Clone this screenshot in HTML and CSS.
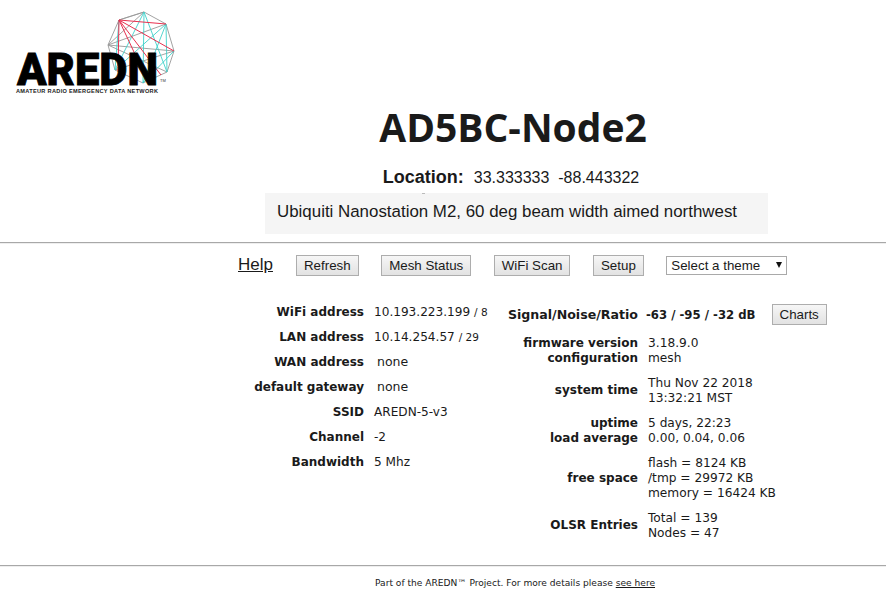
FILE: index.html
```html
<!DOCTYPE html>
<html lang="en">
<head>
    <meta charset="UTF-8">
    <meta name="viewport" content="width=device-width, initial-scale=1.0">
    <title>AD5BC-Node2 status</title>
    <link rel="stylesheet" href="styles.css">
</head>
<body>
    <header class="masthead">
        <svg class="logo" viewBox="0 0 180 100" width="180" height="100" role="img" aria-label="AREDN logo">
            <g fill="none" stroke-width="0.9">
                <g stroke="#999">
                    <path d="M144 12 166 24 174 51 167 72 143 83 115 70 108 45 119 20Z"/>
                    <path d="M119 20 144 12M108 45 174 51M108 45 166 24M144 12 108 45M108 45 167 72M115 70 174 51"/>
                </g>
                <g stroke="#3fd0ca">
                    <path d="M144 12 167 72M144 12 143 83M166 24 143 83M166 24 115 70M144 12 115 70M174 51 143 83M119 20 115 70M166 24 167 72"/>
                </g>
                <g stroke="#e8304f" stroke-width="1">
                    <path d="M119 20 166 24M119 20 174 51M119 20 161 75M119 20 148 82M119 20 118 71"/>
                </g>
            </g>
            <text class="logo-word" x="17" y="85" textLength="141" lengthAdjust="spacingAndGlyphs">AREDN</text>
            <text class="logo-tm" x="160" y="82">TM</text>
            <text class="logo-tag" x="16" y="92.5" textLength="142" lengthAdjust="spacing">AMATEUR RADIO EMERGENCY DATA NETWORK</text>
        </svg>
        <div class="node-head">
            <h1>AD5BC-Node2</h1>
            <p class="location"><strong>Location:</strong><span>33.333333&nbsp;&nbsp;-88.443322</span></p>
            <p class="description">Ubiquiti Nanostation M2, 60 deg beam width aimed northwest</p>
        </div>
    </header>

    <hr class="rule">

    <nav class="toolbar">
        <a class="help" href="#">Help</a>
        <button class="btn">Refresh</button>
        <button class="btn">Mesh Status</button>
        <button class="btn">WiFi Scan</button>
        <button class="btn">Setup</button>
        <div class="theme-select">Select a theme<span class="caret"></span></div>
    </nav>

    <main class="status">
        <dl class="col-left">
            <div class="row"><dt>WiFi address</dt><dd>10.193.223.199 <small>/ 8</small></dd></div>
            <div class="row"><dt>LAN address</dt><dd>10.14.254.57 <small>/ 29</small></dd></div>
            <div class="row"><dt>WAN address</dt><dd class="none">none</dd></div>
            <div class="row"><dt>default gateway</dt><dd class="none">none</dd></div>
            <div class="row"><dt>SSID</dt><dd>AREDN-5-v3</dd></div>
            <div class="row"><dt>Channel</dt><dd>-2</dd></div>
            <div class="row"><dt>Bandwidth</dt><dd>5 Mhz</dd></div>
        </dl>
        <div class="col-right">
            <div class="group signal">
                <div class="labels">Signal/Noise/Ratio</div>
                <div class="values"><b>-63 / -95 / -32 dB</b><button class="btn charts">Charts</button></div>
            </div>
            <div class="group">
                <div class="labels">firmware version<br>configuration</div>
                <div class="values">3.18.9.0<br>mesh</div>
            </div>
            <div class="group raised">
                <div class="labels">system time</div>
                <div class="values">Thu Nov 22 2018<br>13:32:21 MST</div>
            </div>
            <div class="group">
                <div class="labels">uptime<br>load average</div>
                <div class="values">5 days, 22:23<br>0.00, 0.04, 0.06</div>
            </div>
            <div class="group">
                <div class="labels">free space</div>
                <div class="values">flash = 8124 KB<br>/tmp = 29972 KB<br>memory = 16424 KB</div>
            </div>
            <div class="group raised">
                <div class="labels">OLSR Entries</div>
                <div class="values">Total = 139<br>Nodes = 47</div>
            </div>
        </div>
    </main>

    <hr class="rule">

    <footer class="foot">Part of the AREDN&trade; Project. For more details please <a href="#">see here</a></footer>
</body>
</html>
```

FILE: styles.css
```css
* {
    margin: 0;
    padding: 0;
    box-sizing: border-box;
}

body {
    font-family: "DejaVu Sans", Verdana, sans-serif;
    font-size: 12px;
    color: #1a1a1a;
    background: #fff;
}

/* Header */
.masthead {
    display: flex;
    height: 242px;
}

.logo {
    flex: none;
    width: 180px;
    height: 100px;
}

.logo-word {
    font-family: Roboto, "Liberation Sans", sans-serif;
    font-weight: 900;
    font-size: 45px;
    fill: #000;
    stroke: #000;
    stroke-width: 0.8px;
}

.logo-tm {
    font-family: "Liberation Sans", Arial, sans-serif;
    font-size: 4px;
    fill: #333;
}

.logo-tag {
    font-family: "Liberation Sans", Arial, sans-serif;
    font-weight: bold;
    font-size: 5.6px;
    fill: #222;
}

.node-head {
    width: 503px;
    margin-left: 85px;
    text-align: center;
}

h1 {
    margin-top: 100px;
    padding-right: 7px;
    font-family: "Open Sans", sans-serif;
    font-size: 39px;
    font-weight: bold;
    line-height: 54px;
}

.location {
    margin-top: 14px;
    padding-right: 11px;
    font-family: "Liberation Sans", Arial, sans-serif;
    font-size: 16px;
    line-height: 18px;
}

.location strong {
    font-size: 18px;
    margin-right: 10px;
}

.description {
    position: relative;
    height: 41px;
    margin-top: 6px;
    padding: 9px 12px;
    font-family: "Liberation Sans", Arial, sans-serif;
    font-size: 16.9px;
    line-height: 19px;
    text-align: left;
    background: #f5f5f5;
}

/* stray tick on the top edge of the box */
.description::before {
    content: "";
    position: absolute;
    left: 157px;
    top: 0;
    width: 3px;
    height: 1px;
    background: #bbb;
}

.rule {
    border: 0;
    border-top: 1px solid #a8a8a8;
    border-bottom: 1px solid #eee;
    height: 2px;
}

/* Toolbar */
.toolbar {
    display: flex;
    align-items: center;
    height: 42px;
    padding-left: 238px;
    font-family: "Liberation Sans", Arial, sans-serif;
}

.help {
    font-size: 17px;
    color: #1a1a1a;
    margin-right: 23px;
}

.btn {
    height: 21px;
    padding: 0 7px;
    font-family: "Liberation Sans", Arial, sans-serif;
    font-size: 13.33px;
    color: #1a1a1a;
    background: linear-gradient(#f6f6f6, #e2e2e2);
    border: 1px solid #adadad;
    margin-right: 22.5px;
}

.theme-select {
    position: relative;
    width: 121px;
    height: 19px;
    padding: 1px 4px;
    font-size: 13.33px;
    line-height: 15px;
    background: #fff;
    border: 1px solid #a9a9a9;
}

.caret {
    position: absolute;
    right: 4px;
    top: 5px;
    border-left: 3.5px solid transparent;
    border-right: 3.5px solid transparent;
    border-top: 6px solid #111;
}

/* Status tables */
.status {
    display: flex;
    height: 279px;
    padding-top: 17px;
}

.col-left {
    width: 490px;
    margin-top: -4px;
}

.row {
    display: flex;
    align-items: center;
    height: 25px;
}

dt {
    width: 364px;
    text-align: right;
    font-weight: bold;
}

dd {
    margin-left: 10px;
    font-size: 12.1px;
}

dd small {
    font-size: 10.5px;
}

dd.none {
    margin-left: 13px;
    font-size: 12.5px;
}

.col-right {
    padding-top: 1px;
}

.group {
    display: flex;
    align-items: center;
    margin-bottom: 10px;
    line-height: 15px;
}

.group.raised .labels {
    padding-bottom: 2px;
}

.labels {
    width: 148px;
    text-align: right;
    font-weight: bold;
}

.values {
    margin-left: 10px;
    font-size: 12.2px;
}

.signal {
    margin-bottom: 11px;
}

.signal .labels {
    font-size: 12.6px;
}

.signal .values {
    margin-left: 8px;
}

.values b {
    font-size: 11.7px;
}

.btn.charts {
    margin: 0 0 0 16px;
    padding: 0 7px;
}

.foot {
    padding: 11px 0 0 375px;
    font-size: 9.1px;
}

.foot a {
    color: #1a1a1a;
}
```
